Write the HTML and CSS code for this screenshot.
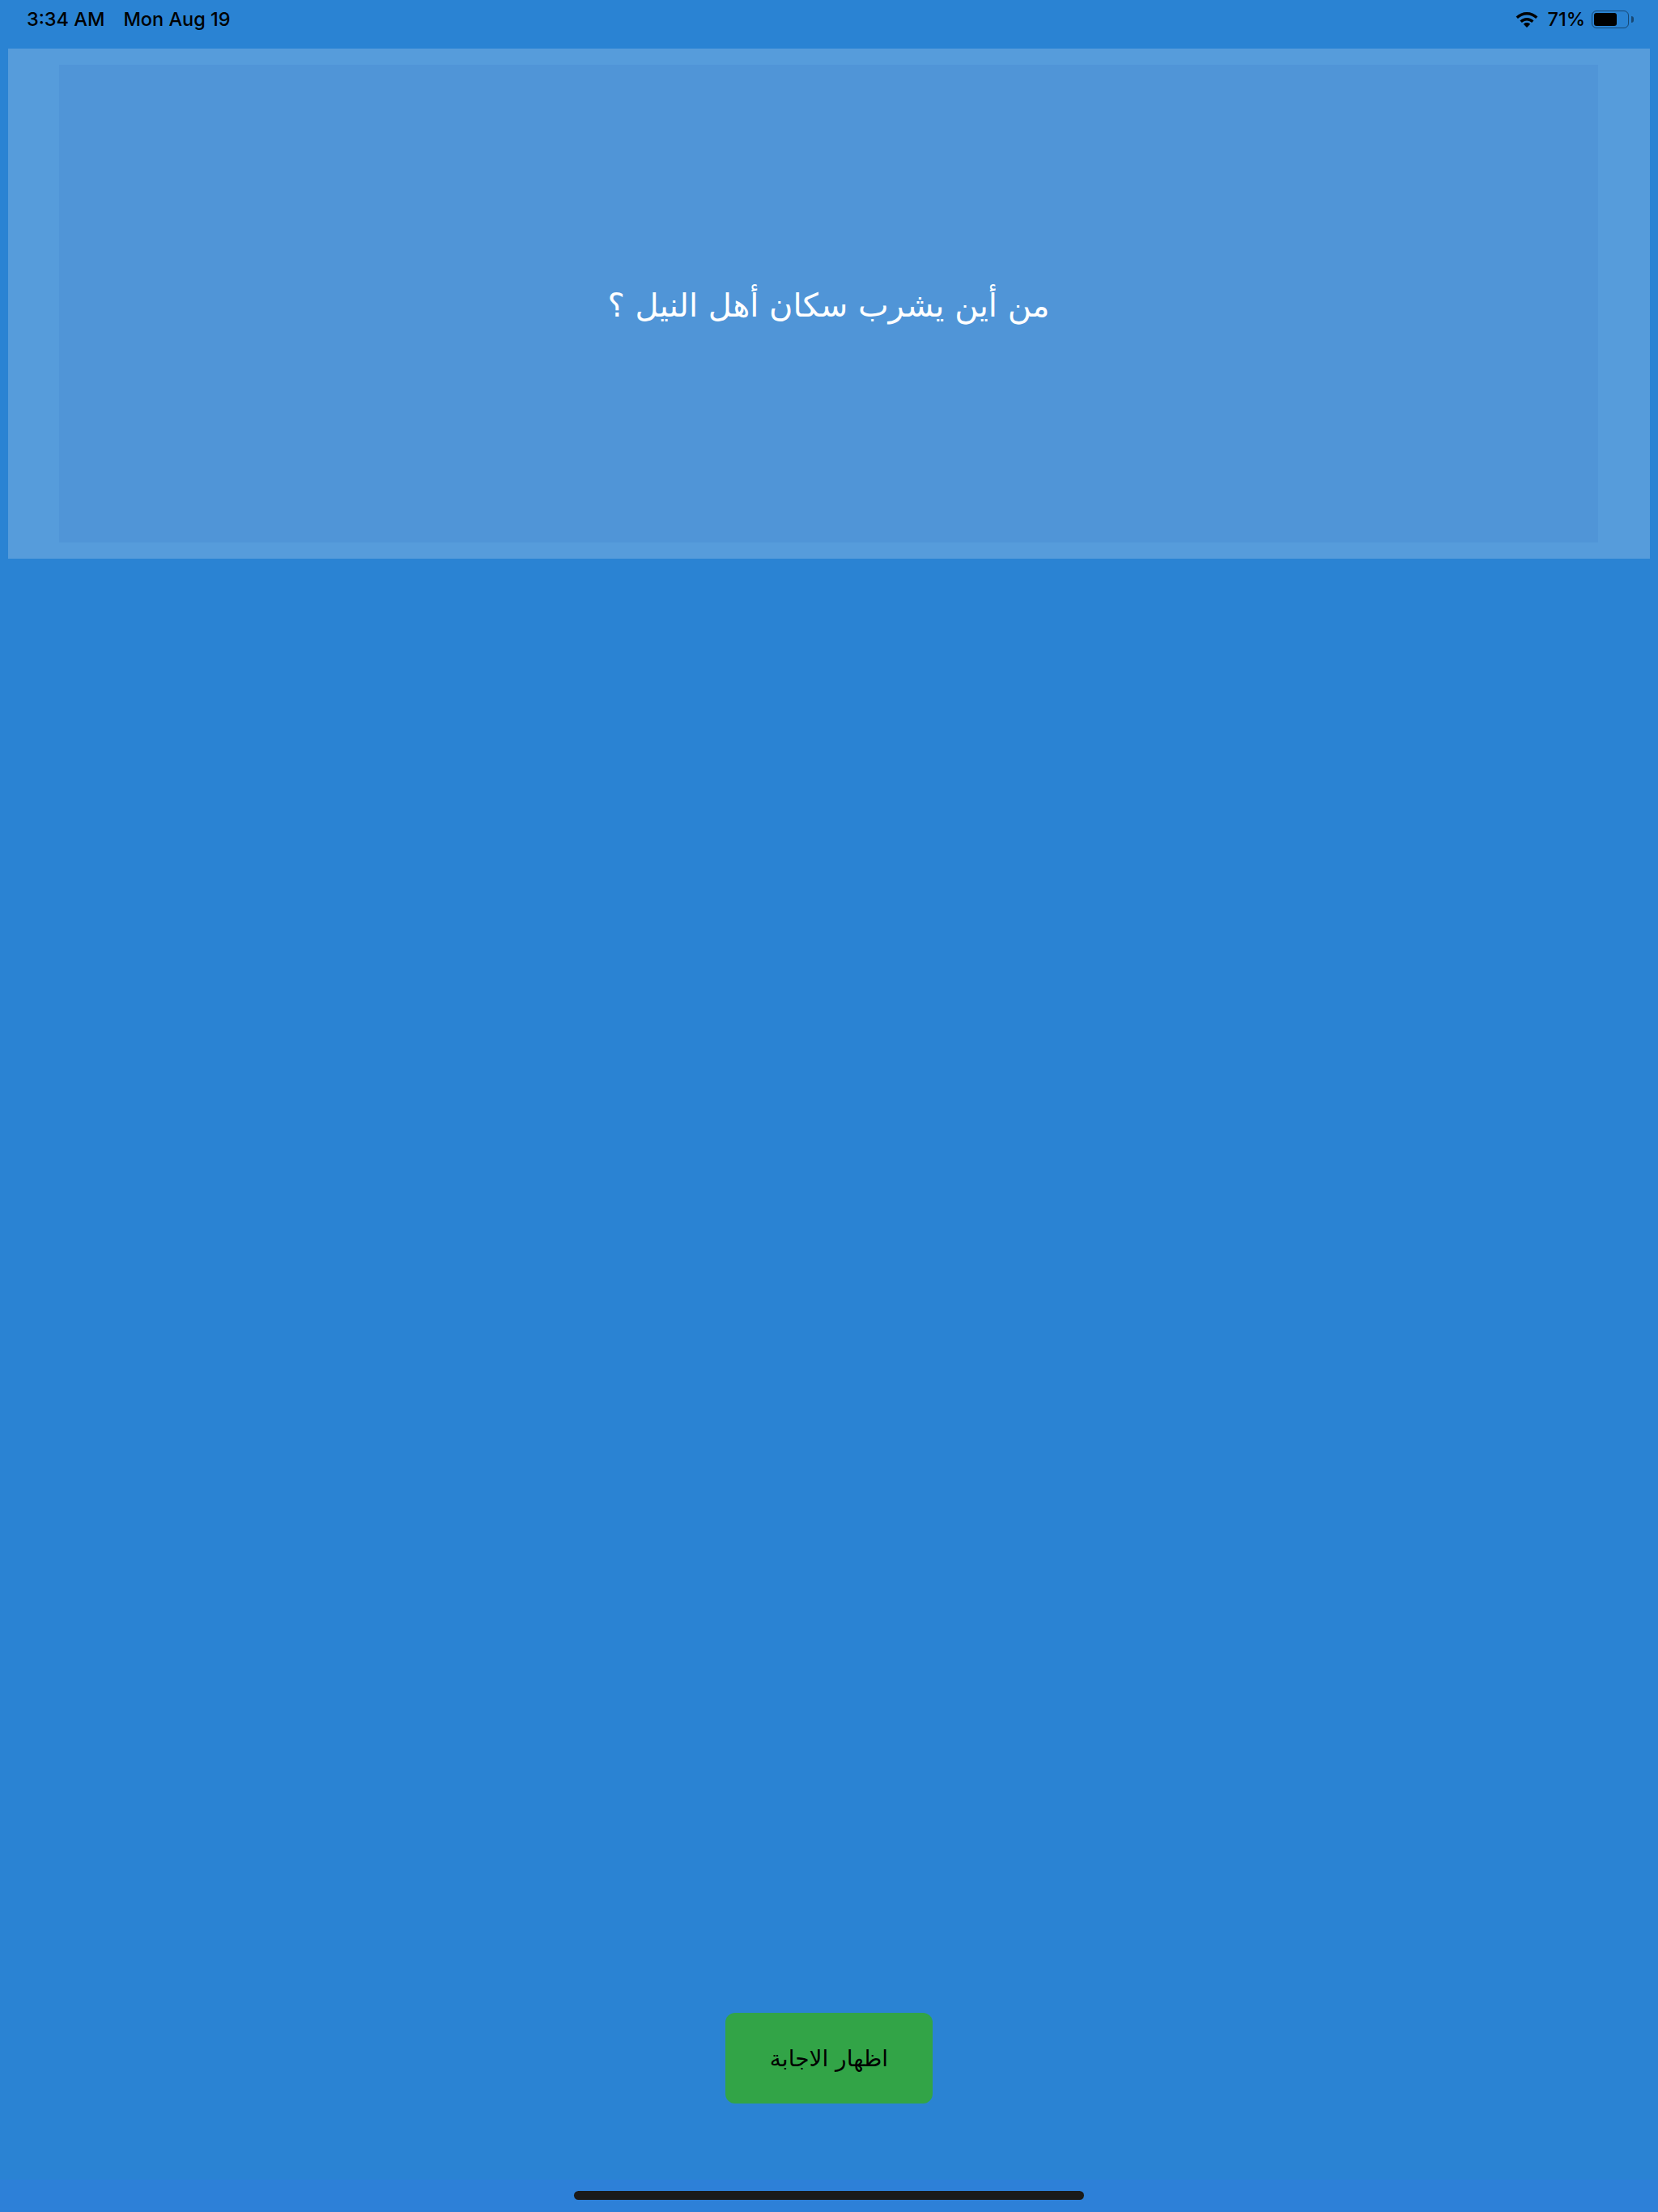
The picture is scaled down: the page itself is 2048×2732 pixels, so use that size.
FILE: index.html
```html
<!DOCTYPE html>
<html lang="ar">
<head>
    <meta charset="UTF-8">
    <meta name="viewport" content="width=device-width, initial-scale=1.0">
    <title>Quiz</title>
    <link rel="stylesheet" href="styles.css">
</head>
<body>
    <div class="screen">
        <div class="status-bar" dir="ltr">
            <div class="status-left">
                <span>3:34 AM</span>
                <span>Mon Aug 19</span>
            </div>
            <div class="status-right">
                <svg class="wifi" viewBox="0 0 28 20" width="28" height="20">
                    <path d="M0.6 6.6C4.2 3 9 1 14 1s9.800 2 13.400 5.600l-2.300 2.500C22.200 6.200 18.200 4.500 14 4.500S5.800 6.200 2.900 9.100z"/>
                    <path d="M5.500 11.500C7.800 9.300 10.800 8 14 8s6.200 1.300 8.500 3.500l-2.400 2.500C18.500 12.500 16.300 11.500 14 11.500s-4.500 1-6.100 2.500z"/>
                    <path d="M9.800 15.800C11 14.700 12.400 14.100 14 14.100s3 .6 4.200 1.700L14 20z"/>
                </svg>
                <span class="battery-pct">71%</span>
                <div class="battery">
                    <div class="battery-level"></div>
                </div>
                <div class="battery-cap"></div>
            </div>
        </div>

        <div class="question-card">
            <div class="question-inner">
                <p class="question-text">من أين يشرب سكان أهل النيل ؟</p>
            </div>
        </div>

        <div class="spacer"></div>

        <div class="actions">
            <button class="answer-btn">اظهار الاجابة</button>
        </div>

        <div class="home-area">
            <div class="home-indicator"></div>
        </div>
    </div>
</body>
</html>
```

FILE: styles.css
```css
* {
    box-sizing: border-box;
}

html, body {
    margin: 0;
    padding: 0;
}

body {
    width: 2048px;
    height: 2732px;
    background-color: #2a83d3;
    font-family: Inter, "Liberation Sans", sans-serif;
    overflow: hidden;
}

.screen {
    display: flex;
    flex-direction: column;
    height: 100%;
}

.status-bar {
    display: flex;
    justify-content: space-between;
    height: 60px;
    padding: 10px 30px 0 33px;
    font-size: 23.5px;
    font-weight: 500;
    line-height: 28px;
    color: #000;
}

.status-left {
    display: flex;
    gap: 23px;
}

.status-right {
    display: flex;
    align-items: flex-start;
}

.wifi {
    margin: 4px 11px 0 0;
    fill: #000;
}

.battery-pct {
    margin-right: 8px;
}

.battery {
    width: 46px;
    height: 22px;
    margin-top: 3px;
    padding: 2px;
    border: 1px solid rgba(0, 0, 0, 0.45);
    border-radius: 6px;
}

.battery-level {
    width: 28px;
    height: 16px;
    background-color: #000;
    border-radius: 3px;
}

.battery-cap {
    width: 3px;
    height: 8px;
    margin: 10px 0 0 3px;
    background-color: rgba(0, 0, 0, 0.45);
    border-radius: 0 3px 3px 0;
}

.question-card {
    height: 630px;
    margin: 0 10px;
    padding: 20px 64px 20px 63px;
    background-color: #569cdb;
}

.question-inner {
    display: flex;
    align-items: center;
    justify-content: center;
    height: 100%;
    padding-top: 4px;
    background-color: #5095d7;
}

.question-text {
    margin: 0;
    direction: rtl;
    font-family: "DejaVu Sans", "Noto Sans", sans-serif;
    font-size: 40px;
    color: #fff;
}

.spacer {
    flex: 1;
}

.actions {
    display: flex;
    justify-content: center;
    padding-bottom: 94px;
}

.answer-btn {
    width: 256px;
    height: 112px;
    padding: 0;
    background-color: #32a447;
    border: none;
    border-radius: 12px;
    direction: rtl;
    font-family: "DejaVu Sans", "Noto Sans", sans-serif;
    font-size: 28px;
    color: #000;
}

.home-area {
    display: flex;
    justify-content: center;
    height: 40px;
    padding-top: 14px;
    background-color: #2d80d8;
}

.home-indicator {
    width: 630px;
    height: 11px;
    background-color: #1a1a1a;
    border-radius: 6px;
}
```
